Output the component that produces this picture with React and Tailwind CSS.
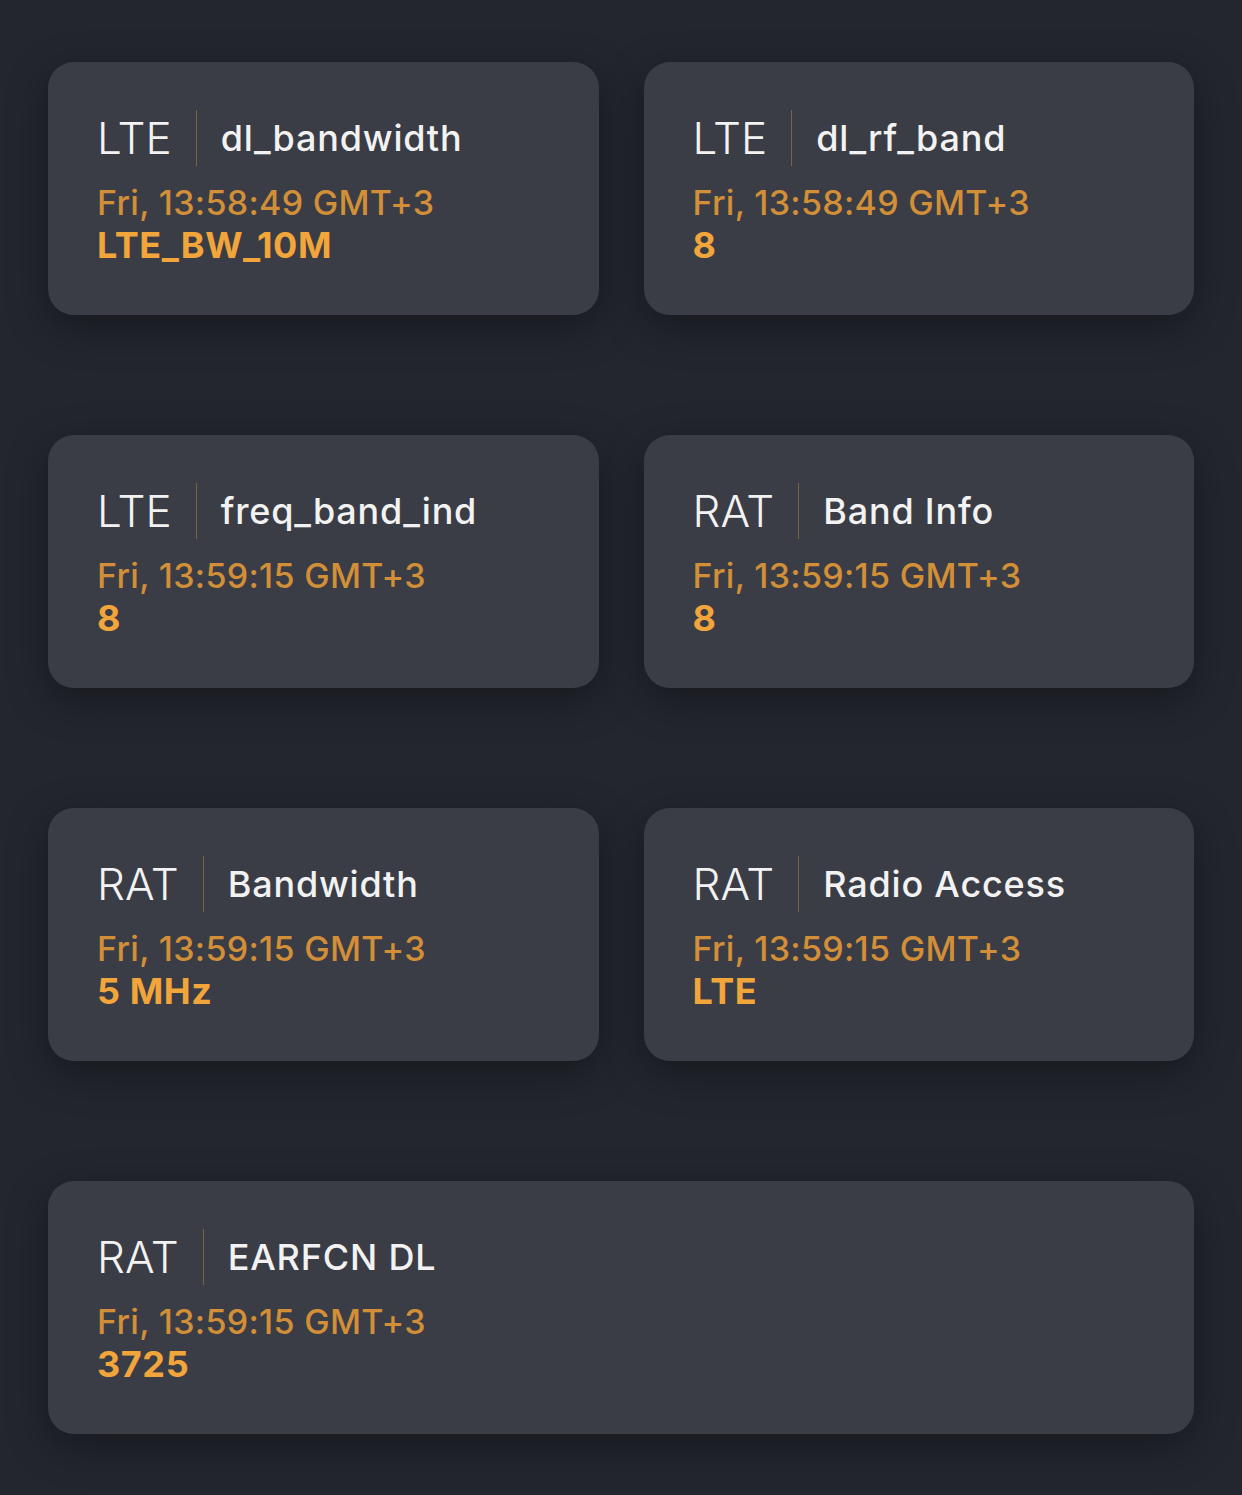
import React from "react";

const cards = [
  { cat: "LTE", name: "dl_bandwidth", time: "Fri, 13:58:49 GMT+3", value: "LTE_BW_10M" },
  { cat: "LTE", name: "dl_rf_band", time: "Fri, 13:58:49 GMT+3", value: "8" },
  { cat: "LTE", name: "freq_band_ind", time: "Fri, 13:59:15 GMT+3", value: "8" },
  { cat: "RAT", name: "Band Info", time: "Fri, 13:59:15 GMT+3", value: "8" },
  { cat: "RAT", name: "Bandwidth", time: "Fri, 13:59:15 GMT+3", value: "5 MHz" },
  { cat: "RAT", name: "Radio Access", time: "Fri, 13:59:15 GMT+3", value: "LTE" },
  { cat: "RAT", name: "EARFCN DL", time: "Fri, 13:59:15 GMT+3", value: "3725", wide: true },
];

function Card({ c }) {
  return (
    <div
      className={
        "h-[253px] rounded-[26px] bg-[#3a3d45] pl-[49px] pt-[48px] shadow-[0_12px_40px_rgba(0,0,0,0.35)] " +
        (c.wide ? "col-span-2" : "")
      }
    >
      <div className="flex h-[56px] items-center">
        <span className="text-[44px] font-light leading-none text-[#f2f2f2]">{c.cat}</span>
        <span className="mx-[24px] h-[56px] w-px bg-[#7a6440]" />
        <span className="text-[36px] font-medium leading-none tracking-[0.8px] text-[#f2f2f2]">{c.name}</span>
      </div>
      <div className="mt-[16px] text-[34px] font-medium leading-[42px] tracking-[0.3px] text-[#d28f37]">{c.time}</div>
      <div className="text-[36px] font-bold leading-[42px] tracking-[0.6px] text-[#f2a53b]">{c.value}</div>
    </div>
  );
}

export default function App() {
  return (
    <div
      className="min-h-[1495px] w-full bg-[#23262e] px-[48px] pt-[62px]"
      style={{ fontFamily: "Inter, 'Noto Sans', sans-serif" }}
    >
      <div className="grid grid-cols-2 gap-x-[45px] gap-y-[120px]">
        {cards.map((c, i) => (
          <Card key={i} c={c} />
        ))}
      </div>
    </div>
  );
}
